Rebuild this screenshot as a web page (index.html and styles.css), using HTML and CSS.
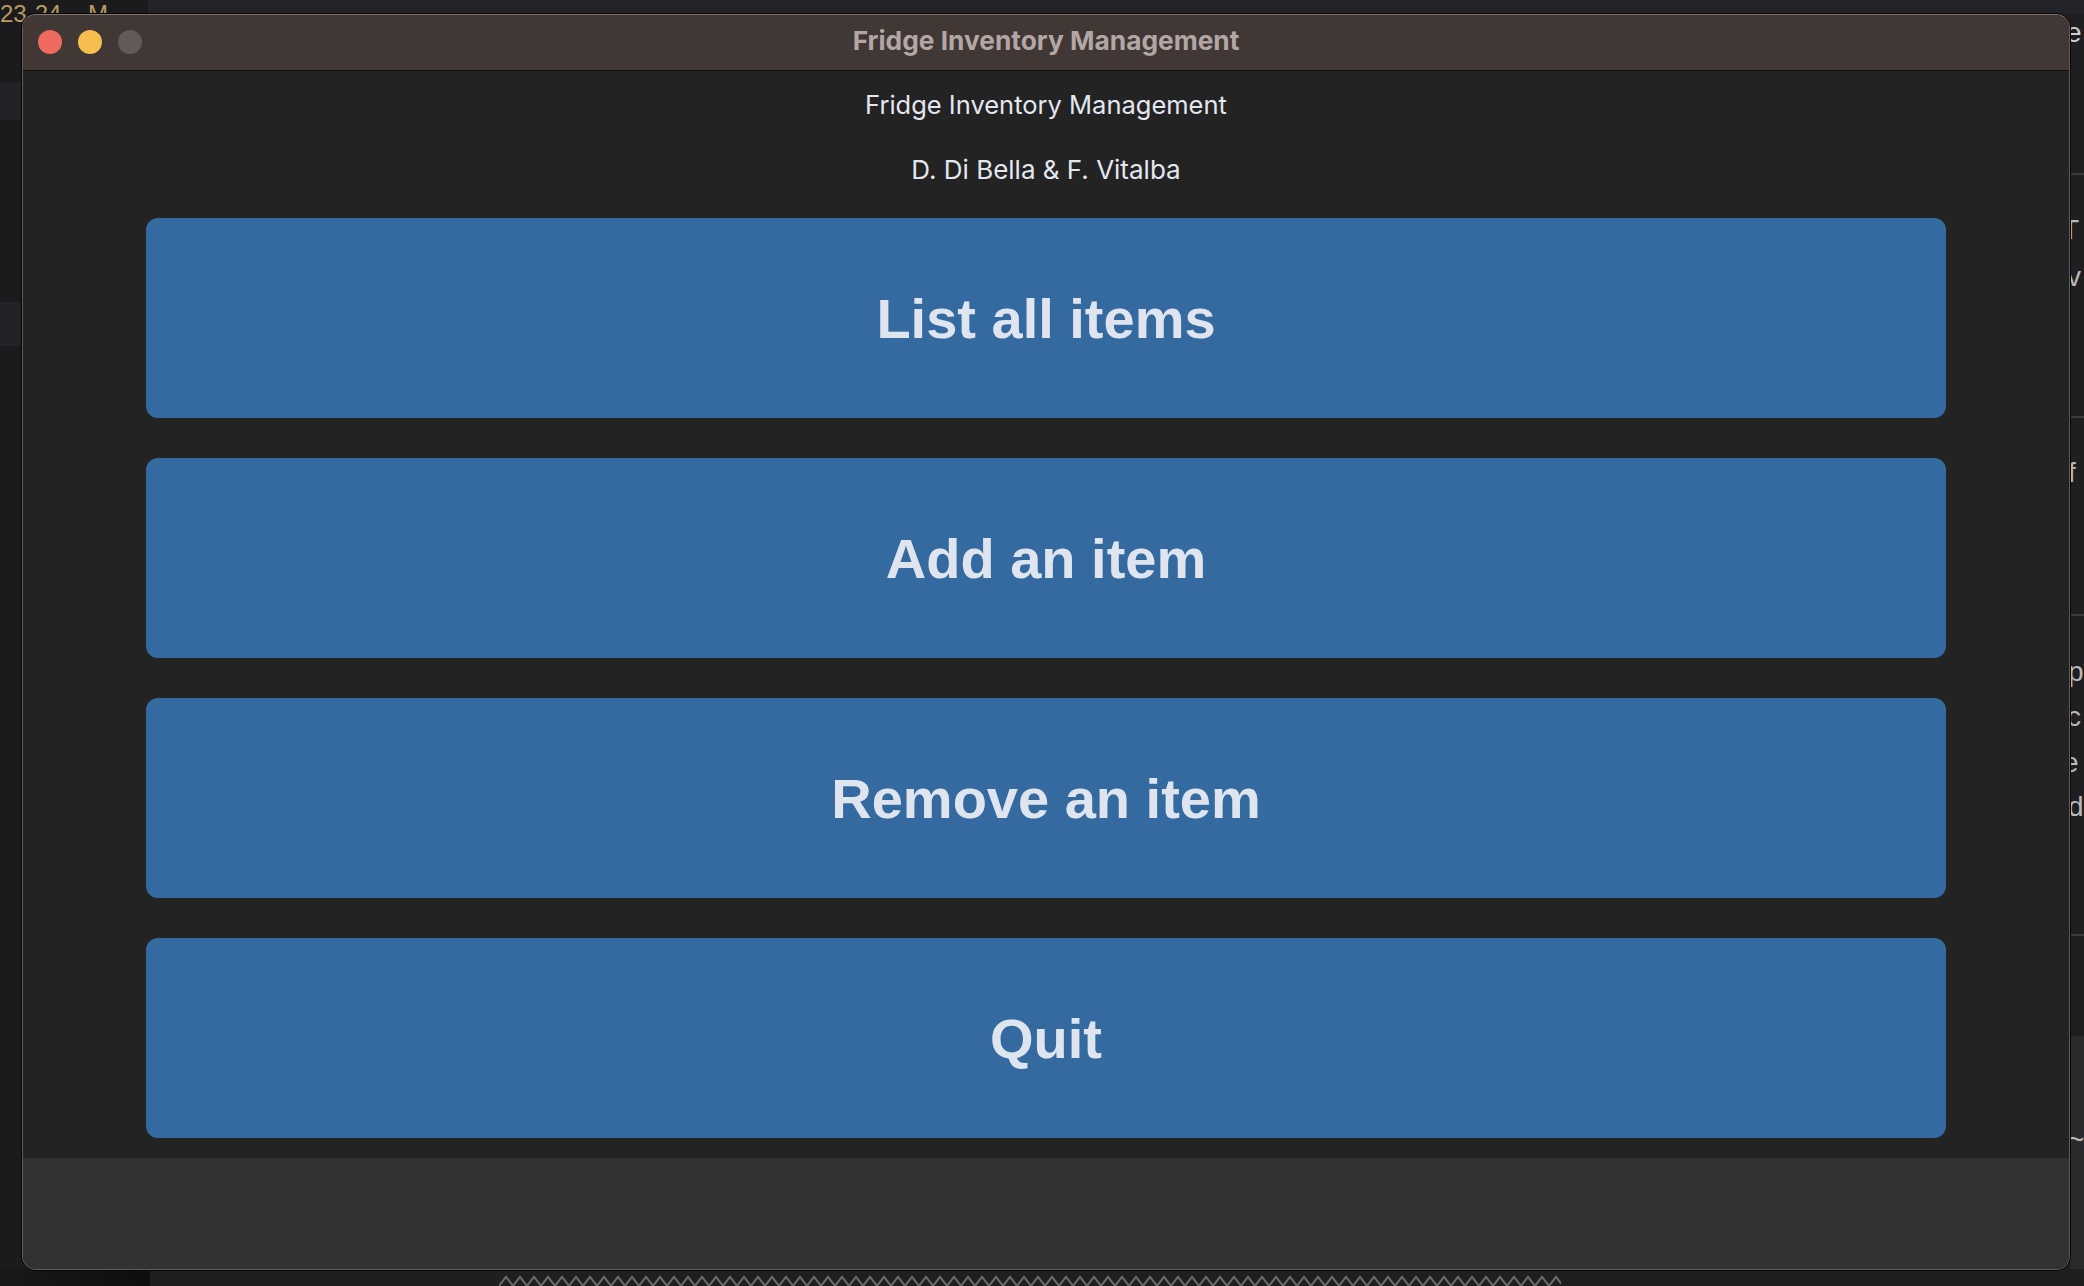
FILE: index.html
```html
<!DOCTYPE html>
<html lang="en">
<head>
<meta charset="utf-8">
<title>Fridge Inventory Management</title>
<link rel="stylesheet" href="styles.css">
</head>
<body>
<div class="desktop">
  <div class="bg-left"></div>
  <div class="bg-left-band band-a"></div>
  <div class="bg-left-band band-b"></div>
  <div class="bg-topline"></div>
  <div class="bg-year">23-24&nbsp;&nbsp;&nbsp;&nbsp;M</div>
  <div class="bg-right-sep sep-a"></div>
  <div class="bg-right-sep sep-b"></div>
  <div class="bg-right-sep sep-c"></div>
  <div class="bg-right-sep sep-d"></div>
  <div class="bg-right-light"></div>
  <div class="bg-letter l1">e</div>
  <div class="bg-letter l2">T</div>
  <div class="bg-letter l3">v</div>
  <div class="bg-letter l4">f</div>
  <div class="bg-letter l5">p</div>
  <div class="bg-letter l6">c</div>
  <div class="bg-letter l7">e</div>
  <div class="bg-letter l8">d</div>
  <div class="bg-letter l9">~</div>
  <div class="bg-bottom-left"></div>
  <svg class="bg-zigzag" width="1062" height="12" viewBox="0 0 1062 12">
    <defs>
      <pattern id="zz" width="14" height="12" patternUnits="userSpaceOnUse">
        <path d="M0 11 L7 2 L14 11" fill="none" stroke="#6b6b6b" stroke-width="2"/>
      </pattern>
    </defs>
    <rect width="1062" height="12" fill="url(#zz)"/>
  </svg>

  <div class="window">
    <div class="titlebar">
      <div class="lights">
        <span class="light red"></span>
        <span class="light yellow"></span>
        <span class="light gray"></span>
      </div>
      <div class="title">Fridge Inventory Management</div>
    </div>
    <div class="content">
      <div class="heading">Fridge Inventory Management</div>
      <div class="authors">D. Di Bella &amp; F. Vitalba</div>
      <div class="buttons">
        <button class="btn">List all items</button>
        <button class="btn">Add an item</button>
        <button class="btn">Remove an item</button>
        <button class="btn">Quit</button>
      </div>
    </div>
    <div class="footer"></div>
  </div>
</div>
</body>
</html>
```
FILE: styles.css
```css
html, body {
  margin: 0;
  padding: 0;
}
body {
  width: 2084px;
  height: 1286px;
  overflow: hidden;
  background: #1f1f22;
  font-family: "Inter", "Noto Sans", sans-serif;
}
.desktop {
  position: relative;
  width: 2084px;
  height: 1286px;
  background: #1f1f22;
  overflow: hidden;
}
.bg-left {
  position: absolute;
  left: 0; top: 0;
  width: 148px; height: 1286px;
  background: #1b1a1d;
  border-right: 1px solid #2a2a2d;
}
.bg-left-band {
  position: absolute;
  left: 0;
  width: 148px;
  background: #232226;
}
.band-a { top: 82px; height: 38px; }
.band-b { top: 302px; height: 44px; }
.bg-topline {
  position: absolute;
  left: 148px; top: 0;
  width: 1936px; height: 14px;
  background: #242327;
}
.bg-year {
  position: absolute;
  left: 0; top: 0;
  font-family: "Liberation Sans", sans-serif;
  font-size: 24px;
  line-height: 28px;
  color: #b99b5d;
  white-space: pre;
}
.bg-right-sep {
  position: absolute;
  left: 2070px;
  width: 14px;
  height: 2px;
  background: #3a3a3d;
}
.sep-a { top: 173px; }
.sep-b { top: 416px; }
.sep-c { top: 614px; }
.sep-d { top: 934px; }
.bg-right-light {
  position: absolute;
  left: 2070px; top: 1036px;
  width: 14px; height: 233px;
  background: #2b2b2e;
}
.bg-letter {
  position: absolute;
  font-family: "Liberation Sans", sans-serif;
  font-size: 28px;
  line-height: 30px;
  color: #b8b8ba;
}
.l1 { top: 18px; left: 2066px; color: #d0d0d2; }
.l2 { top: 215px; left: 2062px; }
.l3 { top: 262px; left: 2067px; }
.l4 { top: 458px; left: 2068px; }
.l5 { top: 657px; left: 2068px; }
.l6 { top: 702px; left: 2067px; }
.l7 { top: 748px; left: 2063px; }
.l8 { top: 792px; left: 2068px; }
.l9 { top: 1125px; left: 2068px; }
.bg-bottom-left {
  position: absolute;
  left: 0; top: 1269px;
  width: 150px; height: 17px;
  background: linear-gradient(90deg, #19181b, #0e0e0f);
}
.bg-zigzag {
  position: absolute;
  left: 499px;
  top: 1275px;
}

/* window */
.window {
  position: absolute;
  left: 22px;
  top: 14px;
  width: 2048px;
  height: 1256px;
  box-sizing: border-box;
  border: 1px solid #625d5b;
  border-top-color: #7b7471;
  border-radius: 14px;
  box-shadow: 0 0 0 1px #050505;
  overflow: hidden;
  display: flex;
  flex-direction: column;
  background: #232323;
}
.titlebar {
  position: relative;
  height: 55px;
  flex: 0 0 55px;
  background: #413735;
  border-bottom: 1px solid #0d0d0d;
  display: flex;
  align-items: center;
  justify-content: center;
}
.lights {
  position: absolute;
  left: 15px;
  top: 15px;
  display: flex;
  gap: 16px;
}
.light {
  width: 24px;
  height: 24px;
  border-radius: 50%;
  display: block;
}
.light.red { background: #ee6a5f; }
.light.yellow { background: #f5be4f; }
.light.gray { background: #625a58; }
.title {
  font-family: "Inter", "Noto Sans", sans-serif;
  font-weight: 700;
  font-size: 26.3px;
  line-height: 32px;
  color: #b2a7a4;
  margin-top: -4px;
}
.content {
  flex: 0 0 1087px;
  height: 1087px;
  box-sizing: border-box;
  padding: 19px 123px 20px;
  display: flex;
  flex-direction: column;
  align-items: center;
  background: #232323;
}
.heading, .authors {
  font-family: "Inter", "Noto Sans", sans-serif;
  line-height: 30px;
  height: 30px;
  color: #e3e7f0;
  text-align: center;
}
.heading {
  font-size: 25.5px;
}
.authors {
  font-size: 26px;
  margin-top: 35px;
}
.buttons {
  margin-top: 33px;
  width: 100%;
  display: flex;
  flex-direction: column;
  gap: 40px;
}
.btn {
  display: block;
  width: 100%;
  height: 200px;
  border: none;
  border-radius: 12px;
  background: #356aa0;
  color: #dfe5ef;
  font-family: "Liberation Sans", Arial, sans-serif;
  font-weight: 700;
  font-size: 56px;
  padding: 0;
  margin: 0;
  cursor: pointer;
}
.footer {
  flex: 1 1 auto;
  background: #323232;
}
```
